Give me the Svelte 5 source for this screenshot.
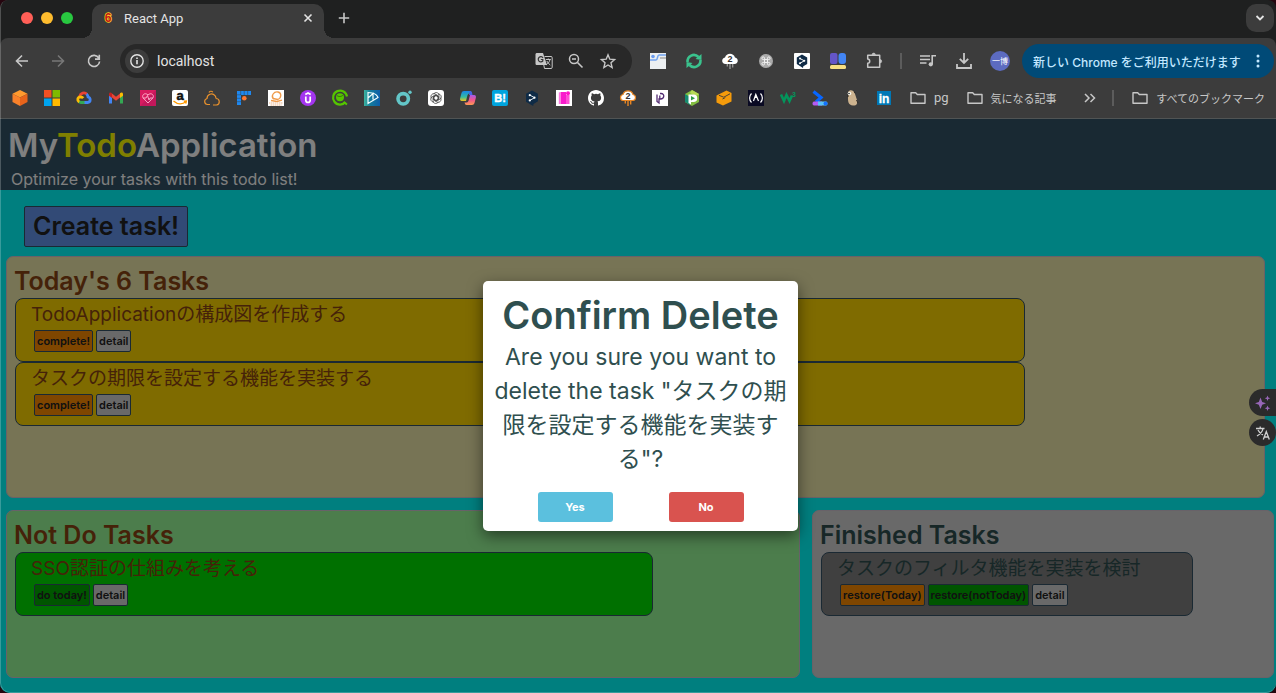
<script>
  const bookmarks = [
    { name: 'Cube', art: '<path d="M8 0l7.500 3.800L8 7.500.5 3.800z" fill="#ff9a2e"/><path d="M.5 3.800L8 7.500V16L.5 12z" fill="#f9812a"/><path d="M15.500 3.800L8 7.500V16l7.500-4z" fill="#e8641b"/>' },
    { name: 'Microsoft', art: '<path d="M0 0h7.500v7.500H0z" fill="#f25022"/><path d="M8.500 0H16v7.500H8.500z" fill="#7fba00"/><path d="M0 8.500h7.500V16H0z" fill="#00a4ef"/><path d="M8.500 8.500H16V16H8.500z" fill="#ffb900"/>' },
    { name: 'Google Cloud', art: '<g fill="none" stroke-width="2.800"><path d="M3.600 6.500C4.500 3 8.500 1.800 11 4.300" stroke="#ea4335"/><path d="M10.500 4c1.200 1 1.500 2 1.600 3 2.700.6 3 5.200-.6 5.500H8" stroke="#4285f4"/><path d="M8.500 12.500H5c-1 0-1.700-.3-2.300-.9" stroke="#34a853"/><path d="M3.200 12C.9 10.500 1.300 7 4.500 6.800c1.200 0 2 .5 2.700 1.400" stroke="#fbbc05"/></g>' },
    { name: 'Mail', art: '<path d="M1 4v9.500h3V7z" fill="#4285f4"/><path d="M15 4v9.500h-3V7z" fill="#34a853"/><path d="M4 3.500l4 3.300 4-3.300v4L8 10.800 4 7.500z" fill="#ea4335"/><path d="M1 4c0-2 2-2 3-.8V8L1 5.800z" fill="#c5221f"/><path d="M15 4c0-2-2-2-3-.8V8l3-2.200z" fill="#fbbc04"/>' },
    { name: 'Health', art: '<path d="M0 0h16v16H0z" fill="#d81b60"/><path d="M0 16L16 0v16z" fill="#c2185b"/><path d="M8 13L3 7.800C1.500 5 5 2 8 5c3-3 6.500 0 5 2.800zM3 8h3l1.500-2.500L9 10l1-2h3" fill="none" stroke="#ffb3d0" stroke-width=".9"/>' },
    { name: 'Amazon', art: '<rect width="16" height="16" rx="2" fill="#fff"/><text x="8" y="10" font-size="13" font-weight="700" text-anchor="middle" fill="#111" stroke="#111" stroke-width=".5">a</text><path d="M1.500 11c4 3.500 9 3.500 12.500.8M11.800 11.200l2.600-.2-.6 2.600" fill="none" stroke="#f90" stroke-width="1.400"/>' },
    { name: 'Cloud', art: '<path d="M6 14.500H3.500C.2 14.300-.5 9.800 3 8.500 3 4.500 8 2 11.200 5.800c.7 1 .8 1.700.7 2.700M9 15h3.500c4-.7 3.500-6.500-.5-6.500M5 2.500C5.500 1 8 .8 8.800 2.200" fill="none" stroke="#e8912d" stroke-width="1.200"/>' },
    { name: 'Grid', art: '<path d="M1 1h14v4H5v10H1z" fill="#1e88f0"/><path d="M4.700 1v4M8.200 1v4M11.700 1v4M1 4.800h4M1 8.300h4M1 11.700h4" stroke="#3c3c3c" stroke-width=".5"/><circle cx="8.300" cy="8.300" r="2.300" fill="#ff7730"/>' },
    { name: 'Academy', art: '<path d="M0 0h16v16H0z" fill="#fff"/><path d="M5.500 9C2.500 6 6 1 10 2c4 1 3.500 6-.2 7.500L5 8.500M3 10.500l6 1 5-1.300" fill="none" stroke="#ef9a4a" stroke-width="1.300"/><path d="M1 13h14M2.500 15h11" stroke="#e9b58c" stroke-dasharray="1.500 .5"/>' },
    { name: 'Udemy', art: '<circle cx="8" cy="8" r="8" fill="#a435f0"/><path d="M5.300 4.600L8 3l2.700 1.600M5.800 6.500v3.700c0 3 4.400 3 4.400 0V6.500" fill="none" stroke="#fff" stroke-width="1.700"/>' },
    { name: 'Qiita', art: '<path d="M15 6.500A7 7 0 1013.500 12" fill="none" stroke="#55c500" stroke-width="2.200"/><circle cx="8" cy="7.200" r="4" fill="#55c500"/><path d="M11.500 12l3.500 2.500" stroke="#55c500" stroke-width="2"/><path d="M4.700 5.200c1.500 1.800 4.700 1.800 6.500-.3" fill="none" stroke="#2d5c10" stroke-width=".8"/>' },
    { name: 'Docs', art: '<defs><linearGradient id="docs"><stop stop-color="#3db39e"/><stop offset=".4" stop-color="#147c9e"/><stop offset="1" stop-color="#0b5ca8"/></linearGradient></defs><path d="M0 0h16v16H0z" fill="url(#docs)"/><path d="M4 2.500l4 .5c3 .6 5.500 3 6 4.500L4 13.500zM4 8l5-4.500V9.500" fill="none" stroke="#f4ffff" stroke-width="1.200"/>' },
    { name: 'Ring', art: '<circle cx="7.200" cy="8.800" r="5.200" fill="none" stroke="#63c6c8" stroke-width="3.600"/><circle cx="14" cy="2.300" r="1.700" fill="#63c6c8"/>' },
    { name: 'OpenAI', art: '<rect width="16" height="16" rx="3" fill="#fff"/><g fill="none" stroke="#333" stroke-width=".7"><path id="petal" d="M5.500 4.200c1.700-2.900 5.500-1.700 5.500 1.100v3.500L8 10.500 5.300 9"/><use href="#petal" transform="rotate(60 8 8)"/><use href="#petal" transform="rotate(120 8 8)"/><use href="#petal" transform="rotate(180 8 8)"/><use href="#petal" transform="rotate(240 8 8)"/><use href="#petal" transform="rotate(300 8 8)"/></g>' },
    { name: 'Copilot', art: '<defs><linearGradient id="cpa" x2="0" y2="1"><stop stop-color="#1786e8"/><stop offset=".6" stop-color="#35bda0"/><stop offset="1" stop-color="#f1c51b"/></linearGradient><linearGradient id="cpb" x2="0" y2="1"><stop stop-color="#a55bea"/><stop offset=".5" stop-color="#f0568c"/><stop offset="1" stop-color="#ff9a51"/></linearGradient></defs><path d="M4 1h6c1 0 1.500 1 2 2.500H9.500C8 3.500 7.500 5 7 7l-1 4H2C0 11-.2 9.500.2 8l1.300-5C1.900 1.700 2.600 1 4 1z" fill="url(#cpa)"/><path d="M12 15H6.500c-1 0-1.500-.8-2-2.500h2c1.500 0 2-1.500 2.500-3.500l1-4h4c2 0 2.200 1.500 1.800 3l-1.300 5c-.4 1.300-1.200 2-2.500 2z" fill="url(#cpb)"/><path d="M9.500 1h1c1 0 1.500 1 2 4H9z" fill="#4763e4"/>' },
    { name: 'Hatena', art: '<rect width="16" height="16" rx="2" fill="#00a4de"/><text x="8" y="12" font-size="11" font-weight="700" text-anchor="middle" fill="#fff" stroke="#fff" stroke-width=".4">B!</text>' },
    { name: 'DeepL', art: '<path d="M8 .5l6 3.300v7.500L9.500 14l-.3 2-2.200-1.300-5-3V3.800z" fill="#0f2b46"/><path d="M6 5.200l4.600 2.500L6 10.300" fill="none" stroke="#dfeaf3"/><g fill="#fff"><circle cx="5.800" cy="5.200" r="1.100"/><circle cx="10.500" cy="7.700" r="1.100"/><circle cx="5.800" cy="10.400" r="1.100"/></g>' },
    { name: 'Pink blocks', art: '<path d="M0 0h16v16H0z" fill="#fff"/><path d="M4.500 2H10v12H4.500z" fill="#f91bcc"/><path d="M10 5h3.500v9H10z" fill="#ff4fd6"/><path d="M2.800 2.500v11.500h1.700v-12z" fill="#ff76df"/><circle cx="12" cy="3.200" r="2" fill="#ff13c9"/>' },
    { name: 'GitHub', art: '<path d="M8 0C3.580 0 0 3.580 0 8c0 3.540 2.290 6.530 5.470 7.590.4.070.55-.17.55-.38 0-.19-.01-.82-.01-1.490-2.010.37-2.530-.49-2.690-.94-.09-.23-.48-.94-.82-1.130-.28-.15-.68-.52-.01-.53.63-.01 1.080.58 1.230.82.72 1.210 1.870.87 2.330.66.07-.52.28-.87.51-1.070-1.780-.2-3.640-.89-3.640-3.950 0-.87.31-1.590.82-2.150-.08-.2-.36-1.020.08-2.120 0 0 .67-.21 2.200.82a7.600 7.600 0 014 0c1.530-1.040 2.200-.82 2.200-.82.44 1.100.16 1.920.08 2.120.51.56.82 1.270.82 2.150 0 3.070-1.870 3.750-3.650 3.950.29.25.54.73.54 1.480 0 1.070-.01 1.930-.01 2.200 0 .21.15.46.55.38A8.010 8.010 0 0016 8c0-4.420-3.580-8-8-8z" fill="#fff"/>' },
    { name: 'Cloud two', art: '<path d="M3.500 10.500C-.5 10.500-.3 5 3 4.500 4.500-.3 11.500-.3 13 4.500c3.300.5 3.500 6-.5 6z" fill="#fff" stroke="#e88624" stroke-width="1.200"/><text x="8" y="9" font-size="9" font-weight="700" text-anchor="middle" fill="#333">2</text><path d="M5.300 11v2.500M8 11v5M10.700 11v3.500" stroke="#e88624" stroke-width="1.400"/>' },
    { name: 'P tile', art: '<path d="M0 0h16v16H0z" fill="#fff"/><path d="M8 3.500h1c4 0 3.500 5.500-.5 5.500H7v4L5 11.500V4.500M7.800 5.500V9" fill="none" stroke="#522b72" stroke-width="1.300"/>' },
    { name: 'P hexagon', art: '<path d="M8 0l7 4v8l-7 4-7-4V4z" fill="#82bd41"/><path d="M1 4v8l5 3V7z" fill="#168b70"/><path d="M8 0l7 4-3 2-6-3z" fill="#b7d957"/><path d="M4.500 4.500h5a3.500 3.500 0 010 7.500H7v2.500l-2.500-1.500z" fill="#fff"/><path d="M7 6l4 2.300L7 10.500z" fill="#2b9b48"/>' },
    { name: 'Box', art: '<path d="M.5 5.500L10.500.5l5 2.500v8.500L7 15.500.5 12.500z" fill="#f59b0b"/><path d="M3 5.300l4.800 1.900L14 3.800M6.500 9l2.800-1.400" fill="none" stroke="#4c4337" stroke-width="1"/>' },
    { name: 'Free Code Camp', art: '<path d="M0 0h16v16H0z" fill="#0a0a23"/><path d="M3.500 3.500c-2.500 2.500-2.500 6.500 0 9M12.500 3.500c2.500 2.500 2.500 6.500 0 9M5.500 11l2.300-6.500 2.700 6.500M8 5l-.5 3" fill="none" stroke="#fff" stroke-width="1.200"/>' },
    { name: 'W3', art: '<path d="M1 4.500l3 6.500 2.500-6 3 6L12 5.500" fill="none" stroke="#04945b" stroke-width="2.600"/><text x="12" y="7" font-size="7" font-weight="700" fill="#04945b">3</text>' },
    { name: 'Prompt', art: '<path d="M1.500 1.500l7.500 6-5 4.500" fill="none" stroke="#0766ff" stroke-width="3.300"/><path d="M2 11.500h8v4H2c-2 0-2-4 0-4z" fill="#b45cf3"/><path d="M6 11.500h8c2 0 2 4 0 4H6z" fill="#58c3f8"/><circle cx="13.500" cy="13.500" r="2" fill="#1371ff"/>' },
    { name: 'Gopher', art: '<path d="M4 2c2-3 6-2 7 2l2 6c1 4-1 6-4 5.500C4 15 4 11 4 8z" fill="#cdb38f"/><circle cx="5.500" cy="3.500" r="1.800" fill="#f7f7ef"/><circle cx="5" cy="3.500" r=".8" fill="#222"/><path d="M3 6h2M12.500 10l1.500 3M10 2l1.500 1" stroke="#2d2823"/>' },
    { name: 'LinkedIn', art: '<path d="M1 1h14v14H1z" fill="#0077b5"/><text x="8" y="12.500" font-size="12" font-weight="700" text-anchor="middle" fill="#fff" stroke="#fff" stroke-width=".3">in</text>' }
  ];

  const extensions = [
    { name: 'Layout', art: '<path d="M0 0h16v16H0z" fill="#eceff1"/><path d="M0 7h6c2 0 1-5 3-5h7" fill="none" stroke="#71a4ef" stroke-width="1.500"/><circle cx="3" cy="3.500" r="1.800" fill="#6a9cf0"/><path d="M10 5h6" stroke="#bbb" stroke-width="2"/>' },
    { name: 'Sync', art: '<path d="M1.500 9C1.200 3 8-.5 12.500 4M14.500 7C14.800 13 8 16.500 3.500 12" fill="none" stroke="#3ac28d" stroke-width="2.600"/><path d="M15.500 1v6L9.500 6zM.5 15V9l6 1z" fill="#3ac28d"/>' },
    { name: 'Cloud two', art: '<path d="M3.500 11C-.8 11-.8 5 3 4.500 4.500-.5 11.500-.5 13 4.500c3.800.5 3.800 6.500-.5 6.500z" fill="#fff"/><text x="8" y="9" font-size="9" font-weight="700" text-anchor="middle" fill="#333">2</text><path d="M5.300 11v2.500M8 11v5M10.700 11v3.500" stroke="#999" stroke-width="1.300"/>' },
    { name: 'Command', art: '<circle cx="8" cy="8" r="7" fill="#aaa"/><path d="M6.500 6.500h3v3h-3zM6.500 6.500H5.300a1.300 1.300 0 111.200-1.300zM9.500 6.500V5.200a1.300 1.300 0 111.200 1.300zM9.500 9.500h1.200a1.300 1.300 0 11-1.200 1.200zM6.500 9.500v1.200a1.300 1.300 0 11-1.200-1.200z" fill="none" stroke="#f0f0f0"/>' },
    { name: 'DeepL', art: '<rect width="16" height="16" rx="1" fill="#fff"/><path d="M8 1.500l5.200 3v6.500L9.300 13.300 9 15l-6.200-4V4.500z" fill="#0f2b46"/><path d="M6 5.500l4.300 2.300L6 10.200" fill="none" stroke="#fff"/><g fill="#fff"><circle cx="6" cy="5.500" r="1"/><circle cx="10.300" cy="7.800" r="1"/><circle cx="6" cy="10.300" r="1"/></g>' },
    { name: 'Blocks', art: '<rect y="0" width="7.500" height="11" rx="2" fill="#6455c7"/><rect x="8.500" width="7.500" height="11" rx="3" fill="#4285f4"/><rect y="12" width="16" height="4" rx="1.500" fill="#f7df82"/>' },
    { name: 'Extensions', art: '<path d="M1.700 2.300h12v11.900h-12v-3.900c2.700-.3 2.700-3.900 0-4.200z" fill="none" stroke="#c7c7c7" stroke-width="1.500" stroke-linejoin="round"/><path d="M6 1.800a1.700 1.700 0 013.400 0zM14 6.500a1.700 1.700 0 010 3.400z" fill="#c7c7c7" stroke="#c7c7c7" stroke-width=".6"/>' }
  ];

  const folders = ['pg', '気になる記事'];

  const todayTasks = ['TodoApplicationの構成図を作成する', 'タスクの期限を設定する機能を実装する'];
  let selected = $state('タスクの期限を設定する機能を実装する');
  let confirming = $state(true);
</script>

{#snippet icon(art, size = 16)}
  <svg width={size} height={size} viewBox="0 0 16 16" aria-hidden="true">{@html art}</svg>
{/snippet}

{#snippet folderIcon()}
  <svg width="16" height="14" viewBox="0 0 16 14" aria-hidden="true">
    <path d="M1 1.700h4.700l1.600 1.800H15v8.800H1z" fill="none" stroke="#c7c7c7" stroke-width="1.400" stroke-linejoin="round" />
  </svg>
{/snippet}

<div class="window">
  <div class="tabstrip">
    <div class="lights"><i class="close"></i><i class="mini"></i><i class="full"></i></div>
    <div class="tab">
      <svg width="12" height="14" viewBox="0 0 12 14" aria-hidden="true">
        <text x="6" y="11" font-size="12" font-weight="700" text-anchor="middle" fill="#c21818" stroke="#ffd21c" stroke-width="1.500" paint-order="stroke">6</text>
      </svg>
      <span>React App</span>
      <button aria-label="Close tab"><svg width="10" height="10" viewBox="0 0 10 10"><path d="M1.500 1.500l7 7M8.500 1.500l-7 7" stroke="#e3e3e3" stroke-width="1.600" /></svg></button>
    </div>
    <button class="plus" aria-label="New tab"><svg width="12" height="12" viewBox="0 0 12 12"><path d="M6 .8v10.400M.8 6h10.400" stroke="#c7c7c7" stroke-width="1.600" /></svg></button>
    <button class="tabsearch" aria-label="Search tabs"><svg width="10" height="8" viewBox="0 0 10 8"><path d="M1.500 2L5 5.500 8.500 2" fill="none" stroke="#e3e3e3" stroke-width="1.800" /></svg></button>
  </div>

  <div class="toolbar">
    <button class="tool" aria-label="Back">{@render icon('<path d="M14 8H3M8 2.500L2.500 8 8 13.500" fill="none" stroke="#c7c7c7" stroke-width="1.600"/>')}</button>
    <button class="tool" aria-label="Forward">{@render icon('<path d="M2 8h11M8 2.500L13.500 8 8 13.500" fill="none" stroke="#777" stroke-width="1.600"/>')}</button>
    <button class="tool" aria-label="Reload">{@render icon('<path d="M12.800 5A5.600 5.600 0 1013.600 8.500M13.300 1.800v4.300H9" fill="none" stroke="#c7c7c7" stroke-width="1.600"/>')}</button>
    <div class="omnibox">
      <button class="info" aria-label="Site information">{@render icon('<circle cx="8" cy="8" r="6.200" fill="none" stroke="#e3e3e3" stroke-width="1.400"/><path d="M8 7v4.300M8 4.500v1.600" stroke="#e3e3e3" stroke-width="1.600"/>')}</button>
      <input aria-label="Address" value="localhost" />
      <button class="omni" aria-label="Translate"><svg width="18" height="18" viewBox="0 0 18 18"><path d="M2 1h6l4 12H2c-1 0-1.500-.5-1.500-1.500v-9C.5 1.500 1 1 2 1z" fill="#c7c7c7" /><path d="M8 5.800A2.600 2.600 0 107.800 9V7.500H5.800" fill="none" stroke="#333" stroke-width="1.200" /><path d="M9.500 4.500H16c.8 0 1.200.4 1.200 1.200v9.600c0 .8-.4 1.200-1.200 1.200H9.500L8.800 13M10.800 7.500h5M13.300 6.500v1M15 7.500c-.5 2.500-2 4-4 5.500M11.800 9c.8 1.500 2 3 3.500 4" fill="none" stroke="#c7c7c7" /></svg></button>
      <button class="omni" aria-label="Zoom">{@render icon('<circle cx="6" cy="6" r="4.500" fill="none" stroke="#c7c7c7" stroke-width="1.500"/><path d="M9.500 9.500l5 5M4 6h4" stroke="#c7c7c7" stroke-width="1.600"/>')}</button>
      <button class="omni" aria-label="Bookmark this page">{@render icon('<path d="M8 1.800l1.800 4.400 4.800.4-3.600 3.200 1.100 4.700L8 12l-4.100 2.500L5 9.800 1.400 6.600l4.800-.4z" fill="none" stroke="#c7c7c7" stroke-width="1.400"/>')}</button>
    </div>
    <div class="tools">
      {#each extensions as item}
        <button class="tool" aria-label={item.name}>{@render icon(item.art)}</button>
      {/each}
      <span class="rule"></span>
      <button class="tool" aria-label="Media">{@render icon('<path d="M0 3h10M0 6.500h10M0 10h6.500M12.200 11V2.800H16" fill="none" stroke="#c7c7c7" stroke-width="1.600"/><circle cx="10.800" cy="11.300" r="2.100" fill="#c7c7c7"/>')}</button>
      <button class="tool" aria-label="Downloads">{@render icon('<path d="M8 0v9.500M3.800 5.800L8 10l4.200-4.200M1 11v4h14v-4" fill="none" stroke="#c7c7c7" stroke-width="1.800"/>')}</button>
      <button class="tool" aria-label="Profile"><span class="avatar">一博</span></button>
    </div>
    <button class="update">新しい Chrome をご利用いただけます<svg width="4" height="16" viewBox="0 0 4 16"><g fill="#c2e7ff"><circle cx="2" cy="3" r="1.500" /><circle cx="2" cy="8" r="1.500" /><circle cx="2" cy="13" r="1.500" /></g></svg></button>
  </div>

  <nav class="bookmarks" aria-label="Bookmarks">
    {#each bookmarks as item}
      <a href="#bookmark" aria-label={item.name}>{@render icon(item.art)}</a>
    {/each}
    {#each folders as name}
      <button class="folder">{@render folderIcon()}<span class:latin={name === 'pg'}>{name}</span></button>
    {/each}
    <button class="more" aria-label="More bookmarks"><svg width="12" height="10" viewBox="0 0 12 10"><path d="M1 1l4 4-4 4M6.500 1l4 4-4 4" fill="none" stroke="#c7c7c7" stroke-width="1.500" /></svg></button>
    <span class="rule"></span>
    <button class="folder">{@render folderIcon()}<span>すべてのブックマーク</span></button>
  </nav>

  <div class="page">
    <header>
      <h1>My<span>Todo</span>Application</h1>
      <p>Optimize your tasks with this todo list!</p>
    </header>
    <main>
      <button class="create">Create task!</button>
      <section class="panel today">
        <h2>Today's 6 Tasks</h2>
        {#each todayTasks as task}
          <article class="card">
            <h3>{task}</h3>
            <div class="actions">
              <button class="orange">complete!</button>
              <button onclick={() => { selected = task; confirming = true; }}>detail</button>
            </div>
          </article>
        {/each}
      </section>
      <div class="row">
        <section class="panel later">
          <h2>Not Do Tasks</h2>
          <article class="card">
            <h3>SSO認証の仕組みを考える</h3>
            <div class="actions"><button class="green">do today!</button><button>detail</button></div>
          </article>
        </section>
        <section class="panel done">
          <h2>Finished Tasks</h2>
          <article class="card">
            <h3>タスクのフィルタ機能を実装を検討</h3>
            <div class="actions"><button class="orange">restore(Today)</button><button class="green">restore(notToday)</button><button>detail</button></div>
          </article>
        </section>
      </div>
    </main>

    {#if confirming}
      <div class="overlay">
        <div class="modal" role="dialog" aria-modal="true" aria-labelledby="confirm-title">
          <h2 id="confirm-title">Confirm Delete</h2>
          <p>Are you sure you want to delete the task "{selected}"?</p>
          <div class="choices">
            <button class="yes" onclick={() => (confirming = false)}>Yes</button>
            <button class="no" onclick={() => (confirming = false)}>No</button>
          </div>
        </div>
      </div>
    {/if}

    <div class="side">
      <button class="spark" aria-label="Assistant">{@render icon('<path d="M5.500 2.500L7.200 7 11 8.300 7.200 9.700 5.500 14 3.800 9.700 0 8.300 3.800 7zM12.500.5l.8 2 2 .8-2 .8-.8 2-.8-2-2-.8 2-.8zM12.500 10.500l.8 2 2 .8-2 .8-.8 2-.8-2-2-.8 2-.8z" fill="#9867b8"/>')}</button>
      <button class="lang" aria-label="Translate page">{@render icon('<path d="M1 3.500h8.500M5.200 1.500v2M8 3.500c-.5 3-2.800 5.500-6 7.500M3 5c1 2.300 2.800 3.800 5 5M8.300 14.500l3-8 3 8M9.300 12h4" fill="none" stroke="#d0d0d0" stroke-width="1.300"/>')}</button>
    </div>
  </div>
</div>

<style>
  :global(body) {
    margin: 0;
    background: #26060f;
  }
  * {
    box-sizing: border-box;
  }
  button {
    padding: 0;
    border: 0;
    background: none;
    font: inherit;
    color: inherit;
  }
  svg {
    display: block;
    flex: none;
    overflow: visible;
    font-family: "Liberation Sans", sans-serif;
  }
  h1, h2, h3, p {
    margin: 0;
  }
  .window {
    position: relative;
    display: flex;
    flex-direction: column;
    min-height: calc(100vh - 1px);
    overflow: hidden;
    border-radius: 8px 8px 10px 10px;
    background: #1f2020;
    font-family: Inter, "Noto Sans CJK JP", sans-serif;
  }
  .window::after {
    content: "";
    position: absolute;
    inset: 0;
    border: 1px solid rgba(255, 255, 255, 0.22);
    border-top: 0;
    border-right: 0;
    border-radius: inherit;
    pointer-events: none;
  }

  .tabstrip {
    display: flex;
    align-items: center;
    height: 38px;
    padding: 0 2px 2px 21px;
    color: #e3e3e3;
  }
  .lights {
    display: flex;
    gap: 8px;
    width: 71px;
  }
  .lights i {
    width: 12px;
    height: 12px;
    border-radius: 50%;
  }
  .close { background: #ff5f57; }
  .mini { background: #febc2e; }
  .full { background: #28c840; }
  .tab {
    position: relative;
    display: flex;
    align-items: center;
    align-self: flex-end;
    gap: 10px;
    width: 232px;
    height: 34px;
    margin-bottom: -2px;
    padding: 0 11px 6px 10px;
    border-radius: 10px 10px 0 0;
    background: #3c3c3c;
    font: 13px Roboto, sans-serif;
  }
  .tab::before,
  .tab::after {
    content: "";
    position: absolute;
    bottom: 0;
    width: 10px;
    height: 10px;
  }
  .tab::before {
    right: 100%;
    background: radial-gradient(circle at 0 0, transparent 10px, #3c3c3c 10px);
  }
  .tab::after {
    left: 100%;
    background: radial-gradient(circle at 100% 0, transparent 10px, #3c3c3c 10px);
  }
  .tab span {
    flex: 1;
  }
  .plus {
    margin-left: 14px;
  }
  .tabsearch {
    display: grid;
    place-items: center;
    width: 28px;
    height: 28px;
    margin-left: auto;
    border-radius: 10px;
    background: #3c3c3c;
  }

  .toolbar {
    display: flex;
    align-items: center;
    height: 46px;
    padding: 0 2px 0 4px;
    border-radius: 8px 8px 0 0;
    background: #3c3c3c;
  }
  .tool {
    display: grid;
    place-items: center;
    width: 36px;
    height: 34px;
  }
  .omnibox {
    display: flex;
    align-items: center;
    flex: 1;
    min-width: 0;
    height: 34px;
    margin: 0 8px;
    padding: 0 8px 0 5px;
    border-radius: 17px;
    background: #282828;
  }
  .info {
    display: grid;
    place-items: center;
    width: 24px;
    height: 24px;
    border-radius: 50%;
    background: #3c3c3c;
  }
  .omnibox input {
    flex: 1;
    min-width: 0;
    padding: 0 8px;
    border: 0;
    outline: 0;
    background: none;
    color: #e3e3e3;
    font: 14px Roboto, sans-serif;
  }
  .omni {
    display: grid;
    place-items: center;
    width: 32px;
    height: 32px;
  }
  .tools {
    display: flex;
    align-items: center;
    margin-right: 4px;
  }
  .rule {
    width: 2px;
    height: 16px;
    background: #5c5c5c;
  }
  .tools .rule {
    margin: 0 8px;
  }
  .avatar {
    display: grid;
    place-items: center;
    width: 20px;
    height: 20px;
    border-radius: 50%;
    background: #5c6bc0;
    color: #fff;
    font: 8px/20px "Noto Sans CJK JP", sans-serif;
  }
  .update {
    display: flex;
    align-items: center;
    justify-content: space-between;
    width: 252px;
    height: 34px;
    padding: 0 14px 0 11px;
    border-radius: 17px;
    background: #004a77;
    color: #c2e7ff;
    font: 500 12px Inter, "Noto Sans CJK JP", sans-serif;
    white-space: nowrap;
  }

  .bookmarks {
    display: flex;
    align-items: center;
    gap: 16px;
    height: 35px;
    padding: 0 11px 6px 12px;
    border-bottom: 1px solid #505454;
    background: #3c3c3c;
    color: #c7c7c7;
  }
  .folder {
    display: flex;
    align-items: center;
    gap: 8px;
    margin-left: 2px;
    font: 11px/16px "Noto Sans CJK JP", sans-serif;
    white-space: nowrap;
  }
  .folder .latin {
    font: 13px/16px Roboto, sans-serif;
  }
  .more {
    margin-left: auto;
  }

  .page {
    position: relative;
    flex: 1;
    background: #00ffff;
  }
  header {
    height: 71px;
    padding: 5px 8px 0;
    background: #325266;
    color: #fff;
  }
  h1 {
    font-size: 33px;
    line-height: 43px;
    font-weight: 600;
  }
  h1 span {
    color: #ff0;
  }
  header p {
    padding-left: 3px;
    font-size: 16px;
    line-height: 24px;
  }
  main {
    padding: 16px 2px 15px 6px;
  }
  .create {
    display: block;
    height: 41px;
    margin: 0 18px 9px;
    padding: 0 8px 2px;
    border: 1px solid #345266;
    border-radius: 2px;
    background: #6495ed;
    color: #222;
    font-size: 25px;
    font-weight: 600;
  }
  .panel {
    padding-top: 8px;
    border: 1px solid #d0c4d0;
    border-radius: 7px;
    color: #8b4513;
  }
  .panel h2 {
    padding-left: 7px;
    font-size: 25px;
    line-height: 33px;
    font-weight: 600;
  }
  .today {
    min-height: 242px;
    margin: 0 9px 12px 0;
    background: #eee8aa;
  }
  .row {
    display: grid;
    grid-template-columns: 794fr 462fr;
    gap: 12px;
  }
  .row .panel {
    min-height: 168px;
  }
  .later {
    background: #98fb98;
  }
  .done {
    background: #d3d3d3;
    color: #2f4f4f;
  }
  .card {
    box-sizing: content-box;
    width: 80%;
    height: 62px;
    margin-left: 8px;
    padding: 0 1px;
    border: 1px solid #345266;
    border-radius: 8px;
    background: #ffd700;
  }
  .later .card {
    background: #00e000;
  }
  .done .card {
    background: #808080;
  }
  h3 {
    padding-left: 14px;
    font-size: 19px;
    line-height: 31px;
    font-weight: 400;
  }
  .actions {
    display: flex;
    gap: 3px;
    padding-left: 17px;
  }
  .actions button {
    height: 22px;
    padding: 0 2px;
    border: 1px solid #345266;
    border-radius: 2px;
    background: #d3d3d3;
    color: #222;
    font-size: 11px;
    font-weight: 600;
  }
  .actions .orange {
    background: #ff8c00;
  }
  .actions .green {
    background: #00aa00;
  }

  .overlay {
    position: absolute;
    inset: 0;
    display: grid;
    place-items: center;
    padding-left: 5px;
    background: rgba(0, 0, 0, 0.5);
  }
  .modal {
    width: 315px;
    padding: 9px 8px;
    border-radius: 5px;
    background: #fff;
    box-shadow: 0 5px 15px rgba(0, 0, 0, 0.5);
    color: #2f4f4f;
    text-align: center;
  }
  .modal h2 {
    font-size: 38px;
    line-height: 50px;
    font-weight: 600;
  }
  .modal p {
    font-size: 23px;
    line-height: 34px;
  }
  .choices {
    display: flex;
    justify-content: center;
    gap: 56px;
    margin-top: 16px;
  }
  .choices button {
    width: 75px;
    height: 30px;
    border-radius: 3px;
    color: #fff;
    font-size: 11px;
    font-weight: 700;
  }
  .yes { background: #5bc0de; }
  .no { background: #d9534f; }

  .side {
    position: absolute;
    top: 270px;
    right: 0;
    display: grid;
    gap: 3px;
  }
  .side button {
    display: grid;
    place-items: center;
    width: 27px;
    height: 27px;
    background: #2b2b2b;
  }
  .side .spark {
    border-radius: 14px 0 0 14px;
  }
  .side .lang {
    border-radius: 50%;
  }
</style>
